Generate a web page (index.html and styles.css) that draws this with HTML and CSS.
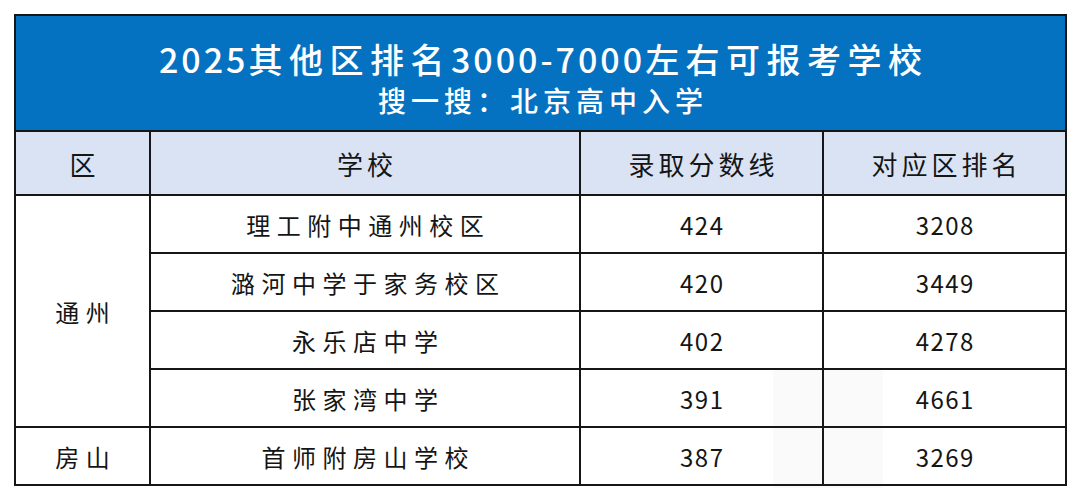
FILE: index.html
```html
<!DOCTYPE html>
<html lang="zh-CN">
<head>
<meta charset="utf-8">
<title>2025其他区排名3000-7000左右可报考学校</title>
<link rel="stylesheet" href="styles.css">
</head>
<body>
<div class="page">
  <table class="rank">
    <colgroup>
      <col class="c-dist">
      <col class="c-school">
      <col class="c-score">
      <col class="c-rank">
    </colgroup>
    <thead>
      <tr class="title-row">
        <th colspan="4" class="title">
          <div class="t1"><span class="n">2025</span>其他区排名<span class="n">3000-7000</span>左右可报考学校</div>
          <div class="t2">搜一搜：北京高中入学</div>
        </th>
      </tr>
      <tr class="head-row">
        <th>区</th>
        <th>学校</th>
        <th>录取分数线</th>
        <th>对应区排名</th>
      </tr>
    </thead>
    <tbody>
      <tr>
        <td rowspan="4" class="dist">通州</td>
        <td class="school">理工附中通州校区</td>
        <td class="num">424</td>
        <td class="num">3208</td>
      </tr>
      <tr>
        <td class="school">潞河中学于家务校区</td>
        <td class="num">420</td>
        <td class="num">3449</td>
      </tr>
      <tr>
        <td class="school">永乐店中学</td>
        <td class="num">402</td>
        <td class="num">4278</td>
      </tr>
      <tr>
        <td class="school">张家湾中学</td>
        <td class="num">391</td>
        <td class="num">4661</td>
      </tr>
      <tr>
        <td class="dist">房山</td>
        <td class="school">首师附房山学校</td>
        <td class="num">387</td>
        <td class="num">3269</td>
      </tr>
    </tbody>
  </table>
  <div class="smudge"></div>
</div>
</body>
</html>
```

FILE: styles.css
```css
html, body {
  margin: 0;
  padding: 0;
  background: #ffffff;
}

body {
  width: 1080px;
  height: 488px;
  overflow: hidden;
  font-family: "Noto Sans CJK SC", "Noto Sans", sans-serif;
  color: #151515;
}

.page {
  position: relative;
  padding: 14px 0 0 14px;
}

.rank {
  border-collapse: collapse;
  width: 1051px;
  table-layout: fixed;
}

.c-dist { width: 135px; }
.c-school { width: 430px; }
.c-score { width: 243px; }
.c-rank { width: 243px; }

.rank th,
.rank td {
  border: 2px solid #161616;
  padding: 0;
  text-align: center;
  vertical-align: middle;
}

.title {
  background: #0471c1;
  color: #ffffff;
  height: 91px;
  font-weight: 500;
  vertical-align: top !important;
  padding-top: 23px !important;
}

.t1 {
  font-size: 34px;
  line-height: 40px;
  height: 40px;
  letter-spacing: 6.5px;
  text-indent: 6.5px;
}

.t1 .n {
  letter-spacing: 3px;
}

.t2 {
  font-size: 28px;
  line-height: 42px;
  height: 42px;
  letter-spacing: 5px;
  text-indent: 5px;
}

.head-row th {
  background: #dae3f3;
  height: 62px;
  font-weight: 400;
  font-size: 26px;
  letter-spacing: 4px;
  text-indent: 4px;
}

tbody td {
  height: 56px;
  font-size: 24px;
}

.dist,
.school {
  letter-spacing: 6.5px;
  text-indent: 6.5px;
}

.num {
  letter-spacing: 1.5px;
  text-indent: 1.5px;
}

.smudge {
  position: absolute;
  left: 773px;
  top: 370px;
  width: 110px;
  height: 118px;
  background: rgba(120, 110, 80, 0.03);
  pointer-events: none;
}
```
